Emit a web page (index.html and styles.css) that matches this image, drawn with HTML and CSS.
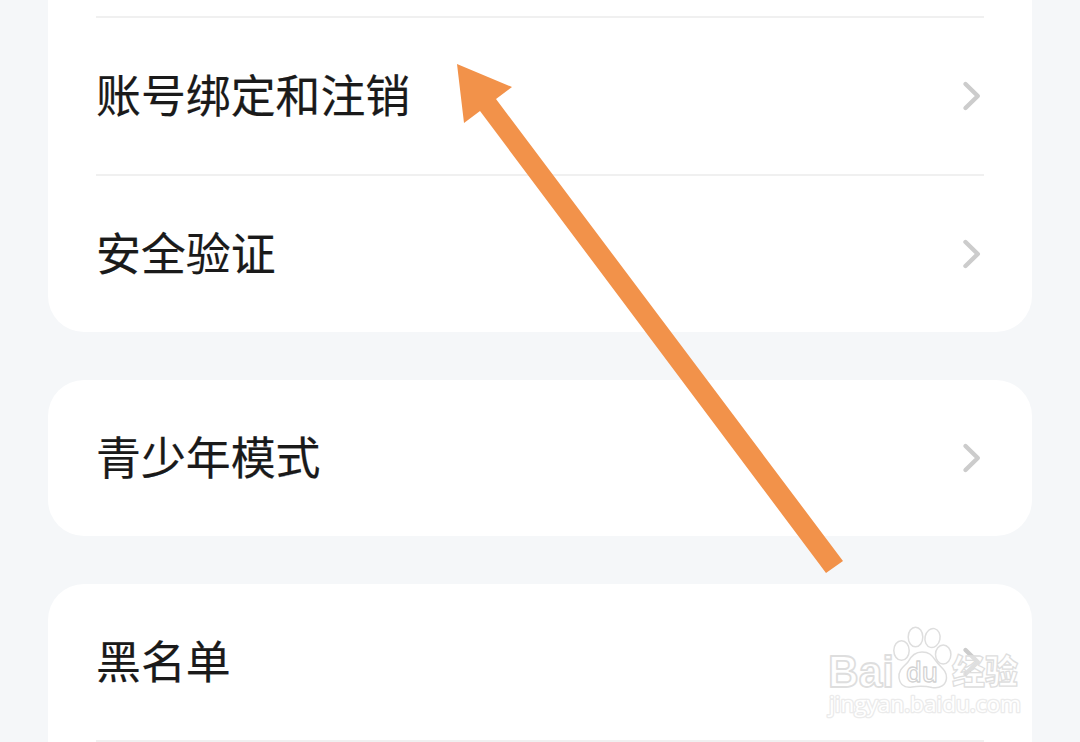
FILE: index.html
```html
<!DOCTYPE html>
<html lang="zh-CN">
<head>
    <meta charset="UTF-8">
    <meta name="viewport" content="width=device-width, initial-scale=1.0">
    <title>设置</title>
    <link rel="stylesheet" href="styles.css">
</head>
<body>
    <div class="settings">
        <div class="card card-first">
            <div class="row">
                <span class="label">账号绑定和注销</span>
                <svg class="chevron" viewBox="0 0 20 32"><path d="M3.5 4L15.8 16L3.5 28"/></svg>
            </div>
            <div class="row">
                <span class="label">安全验证</span>
                <svg class="chevron" viewBox="0 0 20 32"><path d="M3.5 4L15.8 16L3.5 28"/></svg>
            </div>
        </div>
        <div class="card">
            <div class="row">
                <span class="label">青少年模式</span>
                <svg class="chevron" viewBox="0 0 20 32"><path d="M3.5 4L15.8 16L3.5 28"/></svg>
            </div>
        </div>
        <div class="card card-last">
            <div class="row">
                <span class="label">黑名单</span>
                <svg class="chevron" viewBox="0 0 20 32"><path d="M3.5 4L15.8 16L3.5 28"/></svg>
            </div>
        </div>
    </div>

    <svg class="arrow" viewBox="0 0 1080 742"><path d="M457 64L512 87L496 99L843 561L826 573L480 111L464 123Z"/></svg>

    <svg class="watermark" viewBox="0 0 230 132">
        <g class="paw">
            <ellipse cx="91.500" cy="40.5" rx="7.700" ry="9.8"/>
            <ellipse cx="105.5" cy="27" rx="7.3" ry="9.8"/>
            <ellipse cx="122.5" cy="28" rx="7.5" ry="9.6" transform="rotate(12 122.5 28)"/>
            <ellipse cx="133.2" cy="44.5" rx="7.7" ry="9.5"/>
            <path d="M112 42C105 42 101 46 98 52C95 56 88 59 89 68C90 75 95 78 102 77C109 76 115 76 122 77.5C130 79 136 75 136.5 68C137 60 130 57 126 51C122 45 119 42 112 42z"/>
        </g>
        <text class="logo" x="18" y="76.5" textLength="66" lengthAdjust="spacingAndGlyphs">Bai</text>
        <text class="logo du" x="96" y="72" textLength="32" lengthAdjust="spacingAndGlyphs">du</text>
        <text class="logo cn" x="142" y="74" textLength="66" lengthAdjust="spacingAndGlyphs">经验</text>
        <text class="site" x="19" y="102" textLength="192" lengthAdjust="spacingAndGlyphs">jingyan.baidu.com</text>
    </svg>
</body>
</html>
```

FILE: styles.css
```css
body {
    margin: 0;
    height: 742px;
    overflow: hidden;
    background-color: #f5f7f9;
    font-family: "Noto Sans CJK SC", sans-serif;
}
.settings {
    display: flex;
    flex-direction: column;
    gap: 48px;
    padding: 0 48px;
}
.card {
    padding: 0 48px;
    border-radius: 36px;
    background-color: #fff;
}
.card-first {
    padding-top: 16px;
    border-radius: 0 0 36px 36px;
}
.card-last {
    border-radius: 36px 36px 0 0;
}
.row {
    display: flex;
    align-items: center;
    justify-content: space-between;
    height: 156px;
}
.card-first .row {
    border-top: 2px solid #f0f0f0;
}
.card-last .row {
    border-bottom: 2px solid #f0f0f0;
}
.label {
    padding-bottom: 4px;
    color: #1a1a1a;
    font-size: 44.9px;
    line-height: 60px;
    -webkit-text-stroke: 0.2px #1a1a1a;
}
.chevron {
    width: 20px;
    height: 32px;
    margin-right: 2px;
    fill: none;
    stroke: #ccc;
    stroke-width: 4.4;
    stroke-linecap: round;
    stroke-linejoin: round;
}
.arrow {
    position: absolute;
    top: 0;
    left: 0;
    width: 1080px;
    height: 742px;
    fill: #f2924a;
}
.watermark {
    position: absolute;
    top: 610px;
    left: 810px;
    width: 230px;
    height: 132px;
    fill: #fff;
    fill-opacity: 0.4;
    stroke: #dedede;
    stroke-width: 1.5;
    stroke-linejoin: round;
}
.logo {
    font: bold 45px "Liberation Sans", sans-serif;
    stroke-width: 1.8;
}
.du {
    font: 600 27px "Open Sans", sans-serif;
    stroke: #d2d2d2;
    stroke-width: 1.3;
}
.cn {
    font: 900 34px "Noto Sans CJK SC", sans-serif;
    stroke-width: 1.3;
}
.site {
    font: 500 22px "Open Sans", sans-serif;
    fill-opacity: 1;
    stroke: #ebebeb;
    stroke-width: 2.6;
    paint-order: stroke;
}
```
